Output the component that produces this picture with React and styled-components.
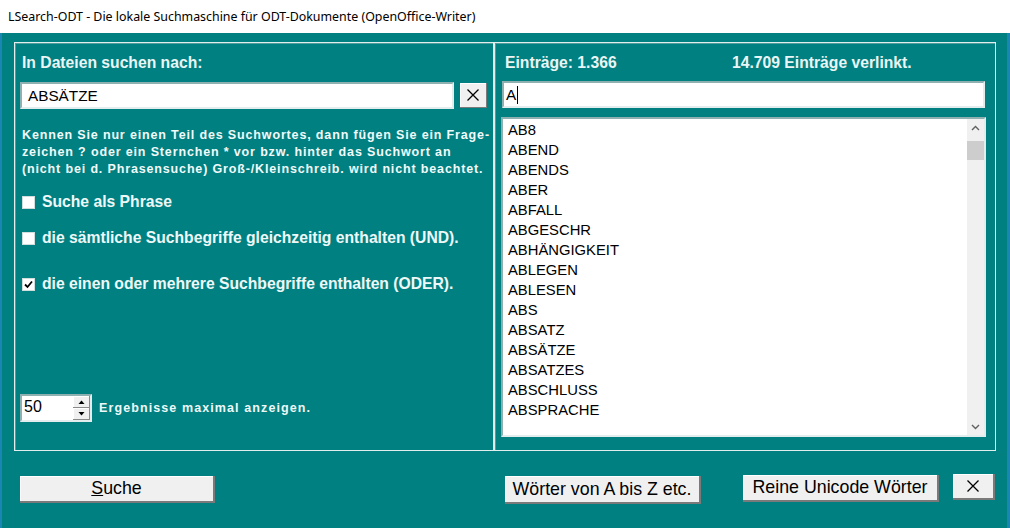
import React from 'react';
import styled, { createGlobalStyle } from 'styled-components';

const GlobalStyle = createGlobalStyle`
  html, body {
    margin: 0;
    padding: 0;
    overflow: hidden;
    background: #ffffff;
  }
  * {
    box-sizing: border-box;
  }
`;

const Window = styled.div`
  width: 1010px;
  height: 528px;
  display: flex;
  flex-direction: column;
  font-family: "Liberation Sans", Arial, sans-serif;
`;

const TitleBar = styled.div`
  height: 33px;
  flex: 0 0 33px;
  background: #ffffff;
  display: flex;
  align-items: center;
  padding-left: 8px;
  font-family: "Noto Sans", "Open Sans", sans-serif;
  font-size: 12.4px;
  color: #000;
`;

const Body = styled.div`
  flex: 1;
  background: #008080;
  border-left: 2px solid #1a86b4;
  border-right: 3px solid #1a86b4;
  padding: 9px 0 0 12px;
  display: flex;
  flex-direction: column;
`;

const Frames = styled.div`
  display: grid;
  grid-template-columns: 480px 502px;
  height: 409px;
`;

const Frame = styled.div`
  border: 1px solid #e2eeee;
  box-shadow: inset 1px 1px 0 #4f9d9d;
  display: flex;
  flex-direction: column;
  padding: ${p => p.$pad || '0'};
`;

const Heading = styled.div`
  font-size: 15.7px;
  font-weight: bold;
  line-height: 16px;
  color: #eaf5f5;
  white-space: nowrap;
  margin-top: ${p => p.$mt || 0}px;
  margin-left: ${p => p.$ml || 0}px;
`;

const HeaderRow = styled.div`
  display: grid;
  grid-template-columns: 227px auto;
  margin-top: 12px;
  margin-left: 10px;
`;

const InputRow = styled.div`
  display: flex;
  align-items: center;
  gap: 6px;
  margin-top: ${p => p.$mt || 0}px;
  margin-left: ${p => p.$ml || 0}px;
`;

const TextField = styled.div`
  width: ${p => p.$w}px;
  height: 27px;
  background: #ffffff;
  border: 2px solid;
  border-color: #8fb0b0 #e4eded #e4eded #8fb0b0;
  display: flex;
  align-items: center;
  padding-left: ${p => p.$pl || 4}px;
  font-size: 15.3px;
  color: #000;
`;

const Caret = styled.span`
  display: inline-block;
  width: 1px;
  height: 18px;
  background: #000;
  margin-left: 1px;
`;

const WinButton = styled.button`
  font-family: "Liberation Sans", Arial, sans-serif;
  font-size: 17.8px;
  color: #000;
  background: #f0f0f0;
  border: none;
  border-right: ${p => (p.$thin ? 1 : 2)}px solid #7a7a7a;
  border-bottom: ${p => (p.$thin ? 1 : 2)}px solid #7a7a7a;
  box-shadow: inset 1px 1px 0 #ffffff;
  width: ${p => p.$w}px;
  height: ${p => p.$h || 27}px;
  margin-left: ${p => p.$ml || 0}px;
  margin-top: ${p => p.$mt || 0}px;
  padding: 0;
  display: flex;
  align-items: center;
  justify-content: center;
  white-space: nowrap;
  cursor: default;
`;

const HelpText = styled.div`
  margin-top: 18px;
  margin-left: 2px;
  font-size: 12.5px;
  font-weight: bold;
  line-height: 17px;
  letter-spacing: 0.85px;
  color: #f2fafa;
  white-space: nowrap;
`;

const CheckRow = styled.div`
  display: flex;
  align-items: center;
  height: 20px;
  margin-top: ${p => p.$mt}px;
  margin-left: 2px;
  gap: 7px;
  font-size: 15.7px;
  font-weight: bold;
  color: #eef8f8;
  white-space: nowrap;
`;

const Box = styled.span`
  width: 13px;
  height: 13px;
  flex: 0 0 13px;
  background: #ffffff;
  border: 1px solid #d0dede;
  display: flex;
  align-items: center;
  justify-content: center;
`;

const SpinRow = styled.div`
  display: flex;
  align-items: center;
  gap: 7px;
  margin-top: 100px;
  font-size: 12.5px;
  font-weight: bold;
  letter-spacing: 1.1px;
  color: #eef8f8;
  white-space: nowrap;
`;

const SpinBox = styled.div`
  width: 72px;
  height: 28px;
  background: #ffffff;
  border: 2px solid;
  border-color: #8fb0b0 #e4eded #e4eded #8fb0b0;
  display: flex;
  font-size: 16px;
  letter-spacing: 0;
  font-weight: normal;
  color: #000;
`;

const SpinValue = styled.div`
  flex: 1;
  padding-left: 2px;
  line-height: 22px;
`;

const SpinButtons = styled.div`
  width: 17px;
  display: flex;
  flex-direction: column;
`;

const SpinBtn = styled.div`
  flex: 1;
  background: #f0f0f0;
  border-right: 1px solid #8a8a8a;
  border-bottom: 1px solid #8a8a8a;
  box-shadow: inset 1px 1px 0 #ffffff;
  display: flex;
  align-items: center;
  justify-content: center;
`;

const ListBox = styled.div`
  margin-top: 9px;
  margin-left: 6px;
  width: 485px;
  height: 320px;
  background: #ffffff;
  border: 2px solid;
  border-color: #8fb0b0 #e4eded #e4eded #8fb0b0;
  display: flex;
`;

const Items = styled.div`
  flex: 1;
  padding: 1px 0 0 5px;
  overflow: hidden;
`;

const Item = styled.div`
  font-size: 14.8px;
  line-height: 20px;
  color: #000;
`;

const ScrollBar = styled.div`
  width: 17px;
  background: #f0f0f0;
  display: flex;
  flex-direction: column;
  align-items: center;
`;

const ScrollArrow = styled.div`
  height: 17px;
  width: 17px;
  display: flex;
  align-items: center;
  justify-content: center;
`;

const Thumb = styled.div`
  width: 17px;
  height: 19px;
  margin-top: 5px;
  background: #cdcdcd;
`;

const ScrollSpace = styled.div`
  flex: 1;
`;

const ButtonRow = styled.div`
  display: flex;
  align-items: flex-start;
  margin-top: 24px;
`;

const Underline = styled.span`
  text-decoration: underline;
`;

const Check = ({ checked }) => (
  <Box>
    {checked && (
      <svg width="9" height="9" viewBox="0 0 9 9">
        <path d="M1 4.5 L3.5 7 L8 1.5" stroke="#000" strokeWidth="1.8" fill="none" />
      </svg>
    )}
  </Box>
);

const Chevron = ({ up }) => (
  <svg width="9" height="6" viewBox="0 0 9 6">
    <path d={up ? 'M1 5 L4.5 1.5 L8 5' : 'M1 1 L4.5 4.5 L8 1'} stroke="#606060" strokeWidth="1.4" fill="none" />
  </svg>
);

const Tri = ({ up }) => (
  <svg width="7" height="4" viewBox="0 0 7 4">
    <path d={up ? 'M0.5 4 L3.5 0.5 L6.5 4 Z' : 'M0.5 0 L3.5 3.5 L6.5 0 Z'} fill="#000" />
  </svg>
);

const Cross = () => (
  <svg width="14" height="14" viewBox="0 0 14 14">
    <path d="M1.5 1.5 L12.5 12.5 M12.5 1.5 L1.5 12.5" stroke="#000" strokeWidth="1.3" />
  </svg>
);

const words = [
  'AB8', 'ABEND', 'ABENDS', 'ABER', 'ABFALL', 'ABGESCHR', 'ABHÄNGIGKEIT', 'ABLEGEN',
  'ABLESEN', 'ABS', 'ABSATZ', 'ABSÄTZE', 'ABSATZES', 'ABSCHLUSS', 'ABSPRACHE',
];

const App = () => (
  <>
    <GlobalStyle />
    <Window>
      <TitleBar>LSearch-ODT - Die lokale Suchmaschine für ODT-Dokumente (OpenOffice-Writer)</TitleBar>
      <Body>
        <Frames>
          <Frame $pad="0 0 0 5px">
            <Heading $mt={12} $ml={2}>In Dateien suchen nach:</Heading>
            <InputRow $mt={11}>
              <TextField $w={434} $pl={6}>ABSÄTZE</TextField>
              <WinButton $w={27} $h={25} $thin><Cross /></WinButton>
            </InputRow>
            <HelpText>
              Kennen Sie nur einen Teil des Suchwortes, dann fügen Sie ein Frage-<br />
              zeichen ? oder ein Sternchen * vor bzw. hinter das Suchwort an<br />
              (nicht bei d. Phrasensuche) Groß-/Kleinschreib. wird nicht beachtet.
            </HelpText>
            <CheckRow $mt={14}><Check />Suche als Phrase</CheckRow>
            <CheckRow $mt={16}><Check />die sämtliche Suchbegriffe gleichzeitig enthalten (UND).</CheckRow>
            <CheckRow $mt={26}><Check checked />die einen oder mehrere Suchbegriffe enthalten (ODER).</CheckRow>
            <SpinRow>
              <SpinBox>
                <SpinValue>50</SpinValue>
                <SpinButtons>
                  <SpinBtn><Tri up /></SpinBtn>
                  <SpinBtn><Tri /></SpinBtn>
                </SpinButtons>
              </SpinBox>
              Ergebnisse maximal anzeigen.
            </SpinRow>
          </Frame>
          <Frame>
            <HeaderRow>
              <Heading>Einträge: 1.366</Heading>
              <Heading>14.709 Einträge verlinkt.</Heading>
            </HeaderRow>
            <InputRow $mt={10} $ml={7}>
              <TextField $w={483} $pl={2}>A<Caret /></TextField>
            </InputRow>
            <ListBox>
              <Items>
                {words.map(w => <Item key={w}>{w}</Item>)}
              </Items>
              <ScrollBar>
                <ScrollArrow><Chevron up /></ScrollArrow>
                <Thumb />
                <ScrollSpace />
                <ScrollArrow><Chevron /></ScrollArrow>
              </ScrollBar>
            </ListBox>
          </Frame>
        </Frames>
        <ButtonRow>
          <WinButton $w={195} $ml={6} $mt={1}><Underline>S</Underline>uche</WinButton>
          <WinButton $w={196} $ml={290} $mt={1} $h={28}>Wörter von A bis Z etc.</WinButton>
          <WinButton $w={196} $ml={42}>Reine Unicode Wörter</WinButton>
          <WinButton $w={42} $ml={14} $mt={-1} $h={26}><Cross /></WinButton>
        </ButtonRow>
      </Body>
    </Window>
  </>
);

export default App;
